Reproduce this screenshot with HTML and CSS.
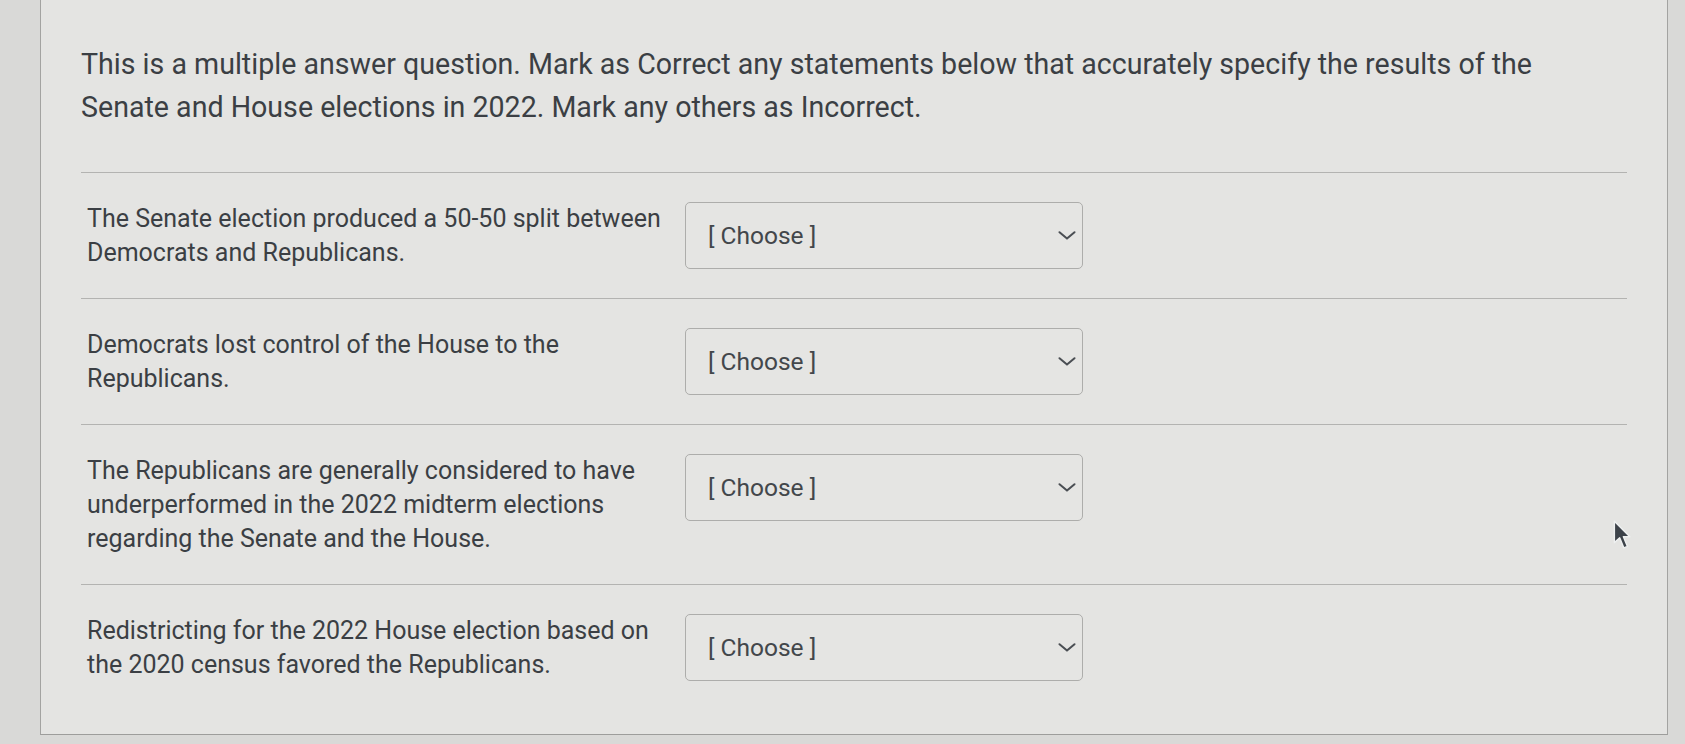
FILE: index.html
```html
<!DOCTYPE html>
<html lang="en">
<head>
<meta charset="utf-8">
<title>Multiple answer question</title>
<link rel="stylesheet" href="styles.css">
</head>
<body>
<div class="panel">
  <p class="question">This is a multiple answer question. Mark as Correct any statements below that accurately specify the results of the Senate and House elections in 2022. Mark any others as Incorrect.</p>
  <div class="answers">
    <div class="row">
      <div class="label">The Senate election produced a 50-50 split between Democrats and Republicans.</div>
      <div class="select"><span class="choose">[ Choose ]</span><svg class="chev" viewBox="0 0 18 9" width="18" height="9"><path d="M1.5 1.2 L9 7.6 L16.5 1.2" fill="none" stroke="#4a4e53" stroke-width="2" stroke-linecap="round" stroke-linejoin="round"/></svg></div>
    </div>
    <div class="row">
      <div class="label">Democrats lost control of the House to the Republicans.</div>
      <div class="select"><span class="choose">[ Choose ]</span><svg class="chev" viewBox="0 0 18 9" width="18" height="9"><path d="M1.5 1.2 L9 7.6 L16.5 1.2" fill="none" stroke="#4a4e53" stroke-width="2" stroke-linecap="round" stroke-linejoin="round"/></svg></div>
    </div>
    <div class="row">
      <div class="label">The Republicans are generally considered to have underperformed in the 2022 midterm elections regarding the Senate and the House.</div>
      <div class="select"><span class="choose">[ Choose ]</span><svg class="chev" viewBox="0 0 18 9" width="18" height="9"><path d="M1.5 1.2 L9 7.6 L16.5 1.2" fill="none" stroke="#4a4e53" stroke-width="2" stroke-linecap="round" stroke-linejoin="round"/></svg></div>
    </div>
    <div class="row">
      <div class="label">Redistricting for the 2022 House election based on the 2020 census favored the Republicans.</div>
      <div class="select"><span class="choose">[ Choose ]</span><svg class="chev" viewBox="0 0 18 9" width="18" height="9"><path d="M1.5 1.2 L9 7.6 L16.5 1.2" fill="none" stroke="#4a4e53" stroke-width="2" stroke-linecap="round" stroke-linejoin="round"/></svg></div>
    </div>
  </div>
  <svg class="cursor" viewBox="0 0 16 26" width="19" height="31"><path d="M2 1 L2 19 L6.5 15 L10 23.5 L13 22.2 L9.6 14 L15 14 Z" fill="#3c4249" stroke="#eef0f0" stroke-width="1.2" stroke-linejoin="round"/></svg>
</div>
</body>
</html>
```
FILE: styles.css
```css
* { box-sizing: border-box; }
html, body {
  margin: 0;
  padding: 0;
  height: 100%;
  overflow: hidden;
}
body {
  background: #d9d9d7;
  font-family: Roboto, "Liberation Sans", Arial, sans-serif;
  color: #3b3f44;
}
.panel {
  position: relative;
  margin-left: 40px;
  width: 1628px;
  height: 735px;
  background: #e4e4e2;
  border-left: 1.5px solid #a3a3a1;
  border-right: 1.5px solid #a3a3a1;
  border-bottom: 1.5px solid #9d9d9b;
  padding: 43px 40px 0 40px;
}
.question {
  margin: 0;
  font-size: 28.6px;
  line-height: 43px;
  padding-right: 20px;
}
.answers {
  margin-top: 43px;
}
.row {
  display: flex;
  align-items: flex-start;
  border-top: 1.5px solid #b3b3b1;
  padding: 29px 0 28px 6px;
}
.label {
  width: 580px;
  flex: none;
  font-size: 25px;
  line-height: 34px;
  margin-right: 18px;
}
.select {
  flex: none;
  width: 398px;
  height: 67px;
  border: 1.5px solid #adadab;
  border-radius: 5px;
  background: #e5e5e3;
  display: flex;
  align-items: center;
  justify-content: space-between;
  padding: 0 6px 0 22px;
}
.choose {
  font-size: 24.5px;
  line-height: 1;
  color: #43474b;
  margin-top: 2px;
}
.chev {
  display: block;
}
.cursor {
  position: absolute;
  left: 1571px;
  top: 520px;
}
```
